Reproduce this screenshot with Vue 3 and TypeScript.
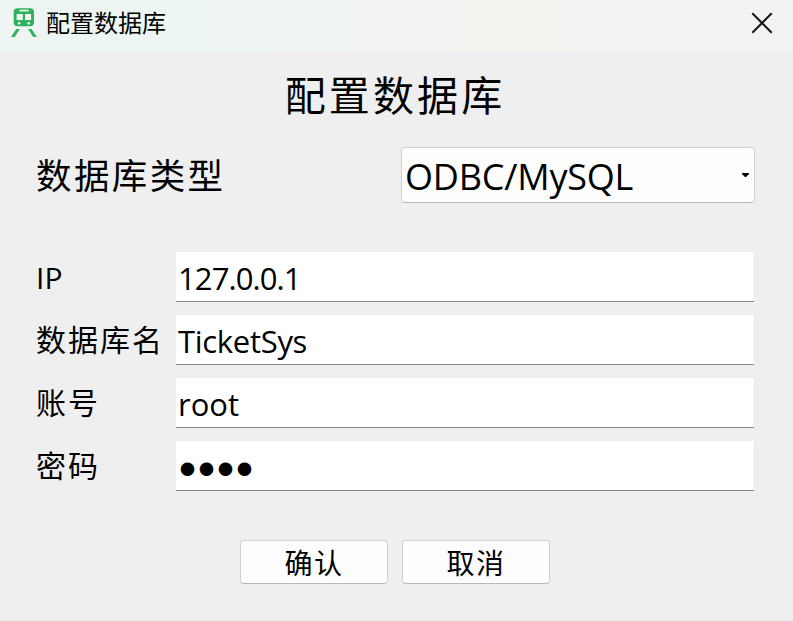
<script setup lang="ts">
import { ref } from 'vue'

interface Field {
  id: string
  label: string
  value: string
}

const title = '配置数据库'
const driver = ref('ODBC/MySQL')
const fields = ref<Field[]>([
  { id: 'ip', label: 'IP', value: '127.0.0.1' },
  { id: 'name', label: '数据库名', value: 'TicketSys' },
  { id: 'user', label: '账号', value: 'root' },
  { id: 'password', label: '密码', value: '●●●●' },
])
</script>

<template>
  <div class="window">
    <header class="titlebar">
      <svg class="logo" viewBox="-3 -1 30 32" width="30" height="32">
        <path
          fill="#2fb25d"
          fill-rule="evenodd"
          d="M6.5 0.3H19.2Q23 0.3 23 4.1V14.5Q23 18.3 19.2 18.3H6.5Q2.7 18.3 2.7 14.5V4.1Q2.7 0.3 6.5 0.3ZM8.4 1.8V3.5H17.6V1.8ZM5.6 6V12H11.8V6ZM14 6V12H20.1V6ZM8.1 13.9A1.4 1.4 0 1 0 8.1 16.7A1.4 1.4 0 1 0 8.1 13.9ZM17.7 13.9A1.4 1.4 0 1 0 17.7 16.7A1.4 1.4 0 1 0 17.7 13.9Z"
        />
        <path d="M5.4 21H9L3.6 29H0ZM17 21H20.6L25.8 29H22.2Z" fill="#2fb25d" />
      </svg>
      <span class="caption">{{ title }}</span>
      <svg class="close" viewBox="0 0 22 22" width="22" height="22">
        <path d="M1.3 1.3L20.7 20.7M20.7 1.3L1.3 20.7" stroke="#161616" stroke-width="2" />
      </svg>
    </header>

    <main class="content">
      <h1 class="heading">{{ title }}</h1>
      <div class="type-row">
        <span class="type-label">数据库类型</span>
        <div class="combo">
          <span class="combo-text">{{ driver }}</span>
          <svg class="arrow" viewBox="0 0 7 4" width="7" height="4">
            <path d="M0 0H7V1L4 4H3L0 1Z" fill="#000" />
          </svg>
        </div>
      </div>

      <div class="form">
        <div v-for="f in fields" :key="f.id" class="row">
          <span class="label" :class="f.id">{{ f.label }}</span>
          <div class="input"><span class="value" :class="f.id">{{ f.value }}</span></div>
        </div>
      </div>

      <div class="actions">
        <button type="button" class="btn">确认</button>
        <button type="button" class="btn">取消</button>
      </div>
    </main>
  </div>
</template>

<style>
body {
  background: #efefef;
}
</style>

<style scoped>
.window {
  box-sizing: border-box;
  width: 793px;
  height: 621px;
  overflow: hidden;
  background: #efefef;
  color: #000;
  font-family: "Open Sans", "Noto Sans CJK SC", sans-serif;
}
.titlebar {
  display: flex;
  align-items: center;
  box-sizing: border-box;
  height: 52px;
  padding: 0 20px 6px 8px;
  background: linear-gradient(90deg, #ecf5f2 0%, #eef5f2 30%, #f3f3f0 60%, #f3f2f1 100%);
}
.logo {
  flex: none;
  background: #f0f4f2;
}
.caption {
  flex: 1;
  margin-left: 8px;
  padding-bottom: 2px;
  font: 24px/32px "Noto Sans CJK SC", sans-serif;
}
.close {
  flex: none;
}
.content {
  padding: 0 38px 0 36px;
}
.heading {
  box-sizing: border-box;
  margin: 0;
  padding: 11px 1px 0 0;
  height: 95px;
  font: 400 41px/60px "Noto Sans CJK SC", sans-serif;
  letter-spacing: 3.1px;
  text-align: center;
}
.type-row {
  display: flex;
  justify-content: space-between;
  height: 56px;
}
.type-label {
  font: 35.5px/54px "Noto Sans CJK SC", sans-serif;
  letter-spacing: 2.4px;
}
.combo {
  display: flex;
  align-items: center;
  justify-content: space-between;
  box-sizing: border-box;
  width: 354px;
  padding: 0 5px 0 3px;
  border: 1px solid #d0d0d0;
  border-bottom-color: #b9b9b9;
  border-radius: 4px;
  background: #fdfdfd;
}
.combo-text {
  padding-top: 4px;
  font-size: 36px;
  line-height: 50px;
  letter-spacing: -0.2px;
}
.form {
  display: grid;
  gap: 13px;
  padding-top: 49px;
}
.row {
  display: grid;
  grid-template-columns: 140px 1fr;
  height: 50px;
}
.label {
  font: 30px/46px "Noto Sans CJK SC", sans-serif;
  letter-spacing: 2px;
}
.label.ip {
  font-family: "Open Sans", sans-serif;
  line-height: 52px;
  letter-spacing: 0;
}
.input {
  box-sizing: border-box;
  width: 578px;
  height: 50px;
  padding: 3px 2px 0;
  border-bottom: 1px solid #868686;
  background: #fff;
  box-shadow: 1px 0 #e9e9e9, 0 -1px #ebebeb;
}
.value {
  display: block;
  font-size: 31px;
  line-height: 46px;
  letter-spacing: -0.3px;
}
.value.ip {
  letter-spacing: -0.9px;
}
.value.user {
  letter-spacing: 0;
}
.value.password {
  padding-left: 2px;
  font: 15px/50px "Noto Sans CJK SC", sans-serif;
  letter-spacing: 4px;
}
.actions {
  display: flex;
  gap: 14px;
  padding: 49px 0 0 204px;
}
.btn {
  width: 148px;
  height: 44px;
  padding: 0;
  border: 1px solid #d0d0d0;
  border-bottom-color: #b9b9b9;
  border-radius: 4px;
  background: #fdfdfd;
  color: #000;
  font: 28px/40px "Noto Sans CJK SC", sans-serif;
  letter-spacing: 1.4px;
}
</style>
